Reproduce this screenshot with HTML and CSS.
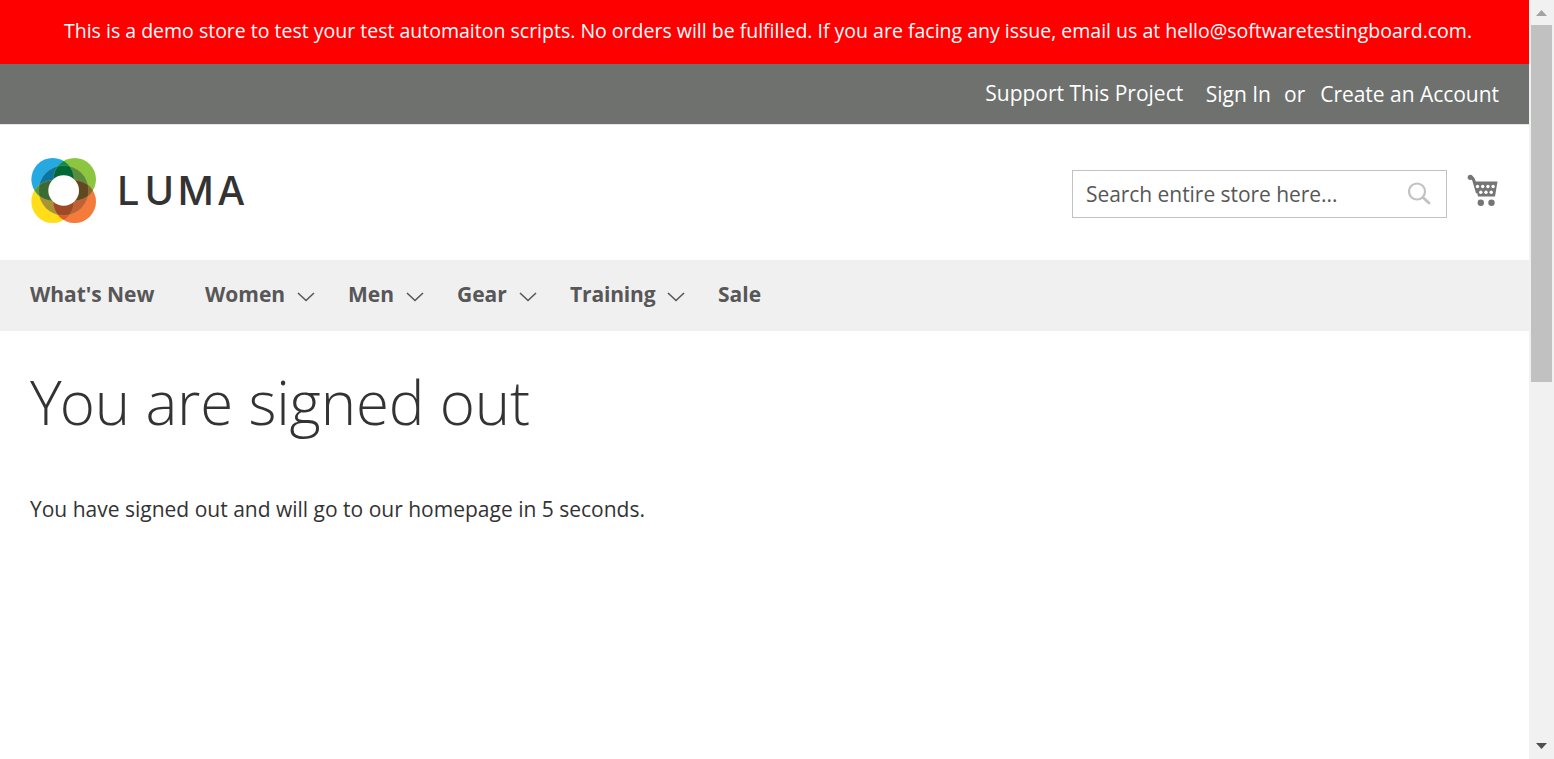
FILE: index.html
```html
<!DOCTYPE html>
<html lang="en">
<head>
<meta charset="utf-8">
<title>You are signed out</title>
<link rel="stylesheet" href="styles.css">
</head>
<body>
<div class="window">
  <div class="page">
    <div class="notice"><span>This is a demo store to test your test automaiton scripts. No orders will be fulfilled. If you are facing any issue, email us at hello@softwaretestingboard.com.</span></div>
    <div class="panel">
      <a class="support">Support This Project</a>
      <a class="signin">Sign In</a>
      <span class="or">or</span>
      <a class="create">Create an Account</a>
    </div>
    <header class="header">
      <a class="logo">
        <svg width="240" height="90" viewBox="0 0 720 270">
          <defs>
            <clipPath id="core"><circle cx="131" cy="136.500" r="75"/></clipPath>
            <clipPath id="blue"><circle cx="98" cy="103" r="64"/></clipPath>
            <clipPath id="orange"><circle cx="164" cy="170" r="64"/></clipPath>
          </defs>
          <circle cx="98" cy="103" r="64" fill="#26a9e0"/>
          <circle cx="164" cy="103" r="64" fill="#8cc63f"/>
          <circle cx="98" cy="170" r="64" fill="#ffde17"/>
          <circle cx="164" cy="170" r="64" fill="#f47b3b"/>
          <g clip-path="url(#blue)"><circle cx="164" cy="103" r="64" fill="#009444"/><circle cx="98" cy="170" r="64" fill="#4f9b3c"/></g>
          <g clip-path="url(#orange)"><circle cx="164" cy="103" r="64" fill="#8c6a2a"/><circle cx="98" cy="170" r="64" fill="#e05a28"/></g>
          <g clip-path="url(#core)">
            <circle cx="98" cy="103" r="64" fill="#0b759f"/>
            <circle cx="164" cy="103" r="64" fill="#5b8c3d"/>
            <circle cx="98" cy="170" r="64" fill="#a99432"/>
            <circle cx="164" cy="170" r="64" fill="#c06033"/>
            <g clip-path="url(#blue)"><circle cx="164" cy="103" r="64" fill="#006837"/><circle cx="98" cy="170" r="64" fill="#3b6b32"/></g>
            <g clip-path="url(#orange)"><circle cx="164" cy="103" r="64" fill="#62481f"/><circle cx="98" cy="170" r="64" fill="#9f4925"/></g>
          </g>
          <g fill="none" stroke="#b9b38c" stroke-opacity=".45" stroke-width="1.500">
            <circle cx="131" cy="136.500" r="75"/>
            <g clip-path="url(#core)"><circle cx="98" cy="103" r="64"/><circle cx="164" cy="103" r="64"/><circle cx="98" cy="170" r="64"/><circle cx="164" cy="170" r="64"/></g>
          </g>
          <circle cx="131" cy="136.500" r="46" fill="#fff"/>
          <text class="wordmark" x="292 374 473 592" y="179">LUMA</text>
        </svg>
      </a>
      <div class="search">
        <span>Search entire store here...</span>
        <svg width="24" height="24" viewBox="0 0 24 24" fill="none" stroke="#c2c2c2" stroke-linecap="round"><circle cx="10" cy="9.500" r="8" stroke-width="2.200"/><path d="M16 15.500l6 5.500" stroke-width="2.800"/></svg>
      </div>
      <svg class="cart" width="32" height="34" viewBox="0 0 32 34">
        <g transform="translate(.5 0)">
        <path d="M2.500 3.200Q5.500 3 6.500 7L10 19" fill="none" stroke="#757575" stroke-width="3"/>
        <circle cx="2.800" cy="3.300" r="2.600" fill="#757575"/>
        <path d="M7 7.500H30L27.500 22.500H10.500Z" fill="#757575"/>
        <g fill="#fff"><circle cx="10" cy="12.500" r="1.700"/><circle cx="15.200" cy="12.500" r="1.700"/><circle cx="20.400" cy="12.500" r="1.700"/><circle cx="25.600" cy="12.500" r="1.700"/><circle cx="13.300" cy="18.200" r="1.700"/><circle cx="18.500" cy="18.200" r="1.700"/><circle cx="23.700" cy="18.200" r="1.700"/></g>
        <circle cx="13.300" cy="28.700" r="3.200" fill="#757575"/><circle cx="24" cy="28.700" r="3.200" fill="#757575"/>
        </g>
      </svg>
    </header>
    <nav class="nav">
      <a class="new">What's New</a>
      <a class="women">Women<svg class="chevron" viewBox="0 0 18 10"><path d="M1 1l8 7.500L17 1"/></svg></a>
      <a class="men">Men<svg class="chevron" viewBox="0 0 18 10"><path d="M1 1l8 7.500L17 1"/></svg></a>
      <a class="gear">Gear<svg class="chevron" viewBox="0 0 18 10"><path d="M1 1l8 7.500L17 1"/></svg></a>
      <a class="training">Training<svg class="chevron" viewBox="0 0 18 10"><path d="M1 1l8 7.500L17 1"/></svg></a>
      <a class="sale">Sale</a>
    </nav>
    <main class="main">
      <h1><span class="initial">Y</span>ou are signed out</h1>
      <p>You have signed out and will go to our homepage in 5 seconds.</p>
    </main>
  </div>
  <div class="scrollbar">
    <svg class="up" width="11" height="6" viewBox="0 0 12 6" preserveAspectRatio="none"><path d="M0 6L6 0L12 6Z" fill="#a3a3a3"/></svg>
    <div class="thumb"></div>
    <svg class="down" width="11" height="6" viewBox="0 0 12 6" preserveAspectRatio="none"><path d="M0 0H12L6 6Z" fill="#505050"/></svg>
  </div>
</div>
</body>
</html>
```
FILE: styles.css
```css
* { box-sizing: border-box; }
body { margin: 0; overflow: hidden; background: #fff; color: #333; font: 21px/30px "Open Sans", "Noto Sans", sans-serif; }
.window { display: flex; height: 759px; }
.page { flex: 1; min-width: 0; white-space: nowrap; }
.notice { height: 64px; padding: 16px 0 0 64px; background: #f00; color: #fff; font-size: 19.5px; }
.panel { display: flex; height: 60px; padding: 15px 30px 0 0; justify-content: flex-end; background: #6e716e; color: #fff; }
.support { margin: -1px 22.5px 0 0; }
.or { margin: 0 15px 0 13px; }
.create { letter-spacing: -0.03px; }
.header { display: flex; height: 136px; border-top: 1px solid #e5e5e5; padding-left: 20px; }
.logo { display: block; margin-top: 20px; height: 90px; }
.logo svg { display: block; }
.wordmark { font-family: Inter, sans-serif; font-size: 118px; font-weight: 500; fill: #333; }
.search { display: flex; justify-content: space-between; width: 375px; height: 48px; margin: 45px 20px 0 auto; padding: 8px 15px 0 13px; border: 1px solid #c2c2c2; color: #575757; }
.search span { letter-spacing: -0.05px; }
.search svg { margin-top: 3px; }
.cart { margin: 49px 30px 0 0; }
.nav { display: flex; height: 71px; padding: 19px 0 0 30px; background: #f0f0f0; color: #575757; font-weight: 700; }
.nav a { display: flex; }
.new { width: 175px; letter-spacing: -0.05px; }
.women { width: 143px; }
.men { width: 109px; }
.gear { width: 113px; }
.training { width: 148px; letter-spacing: -0.15px; }
.chevron { width: 18px; height: 10px; margin: 13px 0 0 12px; fill: none; stroke: #575757; stroke-width: 1.6; }
.main { padding: 38px 30px 0; }
h1 { margin: 0 0 59px; font-size: 60px; line-height: 66px; font-weight: 300; letter-spacing: -0.16px; }
.initial { letter-spacing: -2px; }
p { margin: 0; }
.scrollbar { display: flex; flex-direction: column; align-items: center; width: 25px; padding: 10px 0; background: #f1f1f1; }
.up { margin-bottom: 9px; }
.thumb { width: 21px; height: 357px; background: #c1c1c1; }
.down { margin-top: auto; }
```
